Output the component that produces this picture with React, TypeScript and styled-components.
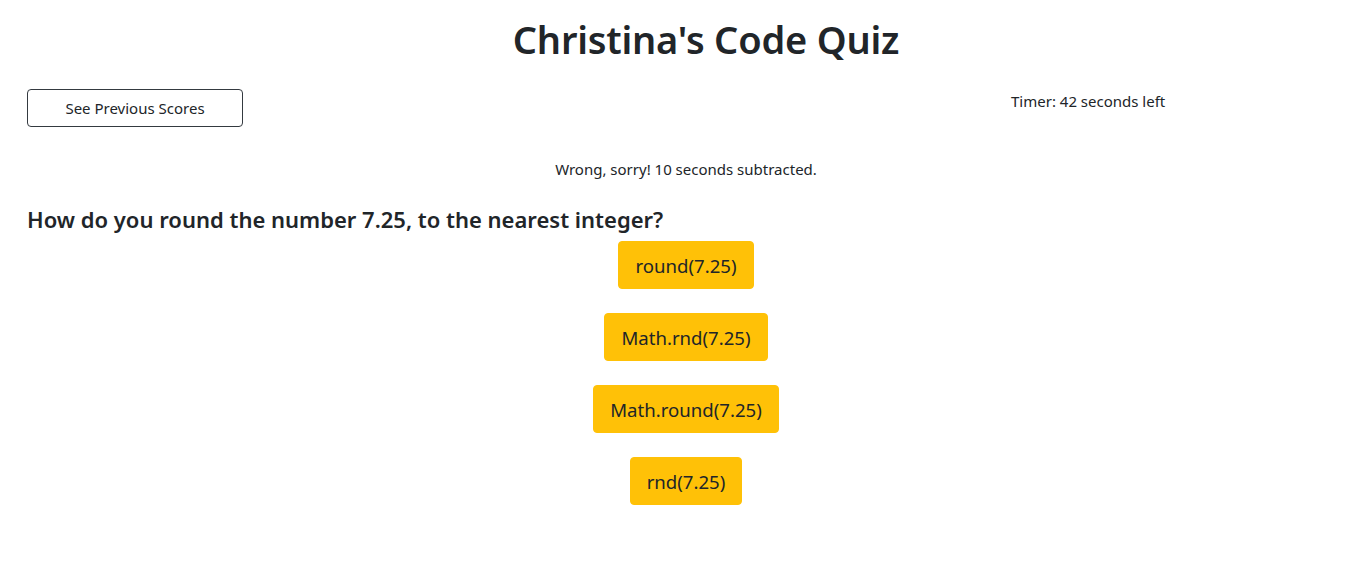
import React from "react";
import styled, { createGlobalStyle } from "styled-components";

const Global = createGlobalStyle`
  html, body { margin: 0; padding: 0; background: #fff; }
  body {
    font-family: "Noto Sans", "Open Sans", "Liberation Sans", sans-serif;
    color: #212529;
  }
  * { box-sizing: border-box; }
`;

const Page = styled.div`
  padding: 0 13px 0 27px;
`;

const Title = styled.h1`
  margin: 0;
  padding: 14px 0 0 40px;
  height: 76px;
  text-align: center;
  font-size: 38px;
  font-weight: 600;
  line-height: 50px;
  letter-spacing: -0.2px;
`;

const TopRow = styled.div`
  display: flex;
  align-items: flex-start;
  margin-top: 13px;
`;

const OutlineButton = styled.button`
  width: 216px;
  height: 38px;
  background: #fff;
  border: 1px solid #343a40;
  border-radius: 4px;
  font-family: inherit;
  font-size: 15px;
  color: #212529;
  padding: 0;
  cursor: pointer;
`;

const Timer = styled.div`
  margin-left: auto;
  width: 334px;
  font-size: 15px;
  line-height: 24px;
`;

const Message = styled.p`
  margin: 30px 0 0;
  text-align: center;
  font-size: 15px;
  line-height: 24px;
`;

const Question = styled.h4`
  margin: 25px 0 0;
  font-size: 22px;
  font-weight: 600;
  line-height: 27px;
`;

const Answers = styled.div`
  display: flex;
  flex-direction: column;
  align-items: center;
  gap: 24px;
  margin-top: 8px;
`;

const AnswerButton = styled.button`
  height: 48px;
  padding: 0 16px;
  background: #ffc107;
  border: 1px solid #ffc107;
  border-radius: 4px;
  font-family: inherit;
  font-size: 18.6px;
  color: #212529;
  cursor: pointer;
`;

const answers = ["round(7.25)", "Math.rnd(7.25)", "Math.round(7.25)", "rnd(7.25)"];

export default function App() {
  return (
    <>
      <Global />
      <Page>
        <Title>Christina's Code Quiz</Title>
        <TopRow>
          <OutlineButton>See Previous Scores</OutlineButton>
          <Timer>Timer: 42 seconds left</Timer>
        </TopRow>
        <Message>Wrong, sorry! 10 seconds subtracted.</Message>
        <Question>How do you round the number 7.25, to the nearest integer?</Question>
        <Answers>
          {answers.map((a) => (
            <AnswerButton key={a}>{a}</AnswerButton>
          ))}
        </Answers>
      </Page>
    </>
  );
}
